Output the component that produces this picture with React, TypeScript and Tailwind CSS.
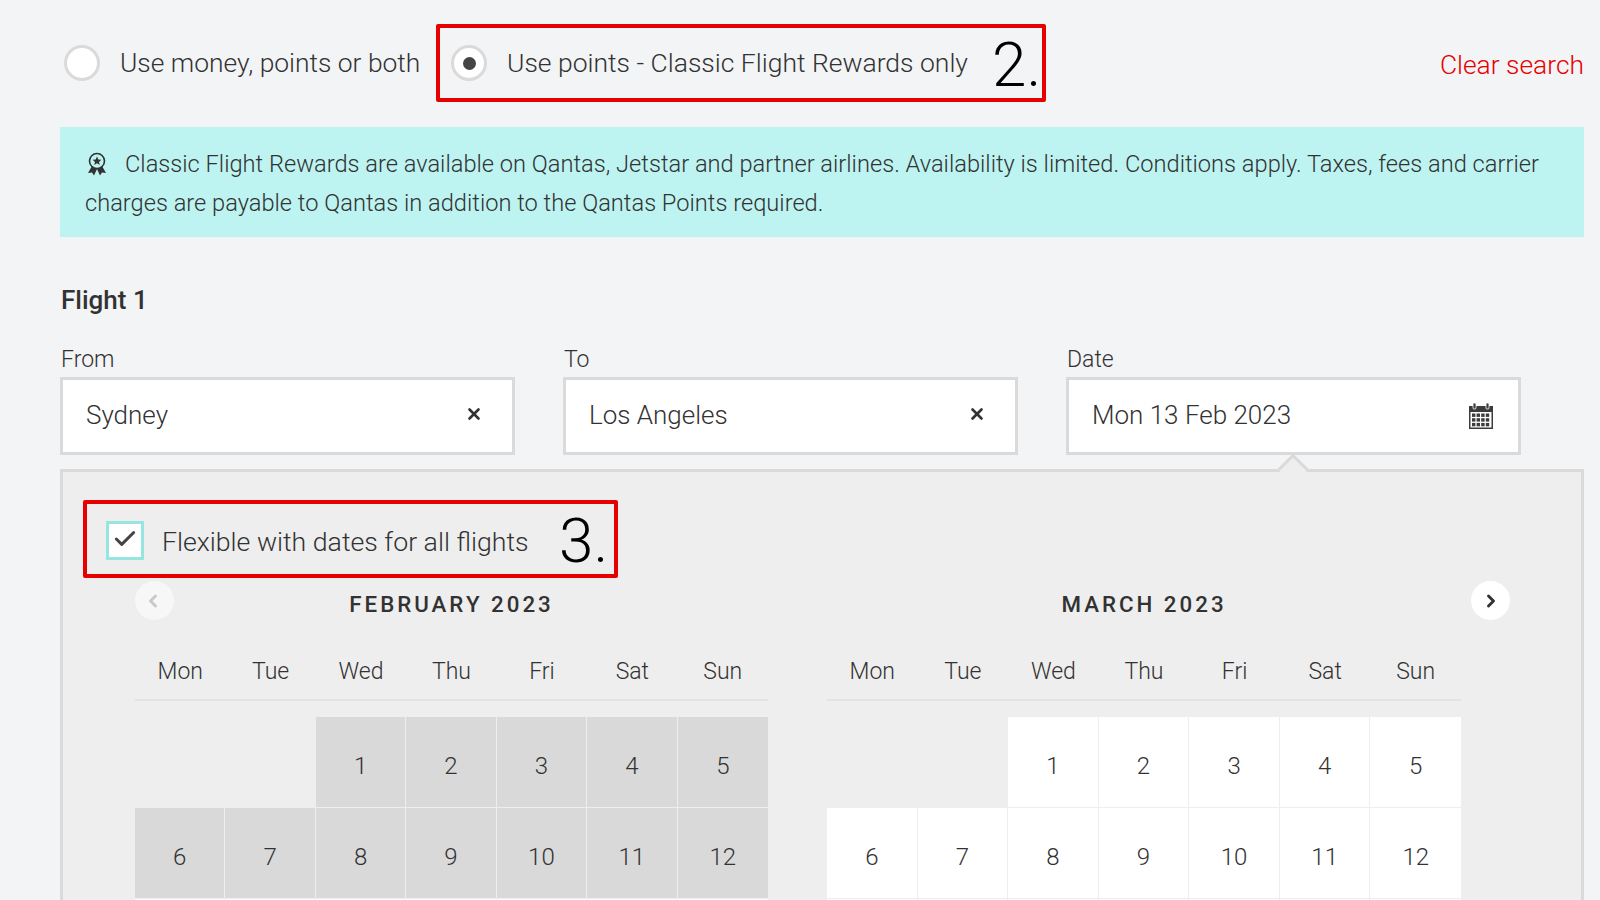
import { Check, ChevronLeft, ChevronRight, X } from "lucide-react";

const days = ["Mon", "Tue", "Wed", "Thu", "Fri", "Sat", "Sun"];
const firstWeek = ["", "", "1", "2", "3", "4", "5"];
const secondWeek = ["6", "7", "8", "9", "10", "11", "12"];
const thirdWeek = ["", "", "", "", "", "", ""];

function Rosette() {
  return (
    <svg viewBox="0 0 20 24" className="w-[20px] h-[24px] shrink-0 text-[#323232]">
      <path d="M5 14 L1 21 L5 20.5 L7 23.5 L10 17 L13 23.5 L15 20.5 L19 21 L15 14 Z" fill="currentColor" />
      <circle cx="10" cy="9" r="7.5" fill="#bdf4f1" stroke="currentColor" strokeWidth="1.6" />
      <path d="M10 4.6 L11.3 7.6 L14.4 7.8 L12 9.9 L12.8 13 L10 11.3 L7.2 13 L8 9.9 L5.6 7.8 L8.7 7.6 Z" fill="currentColor" />
    </svg>
  );
}

function CalendarIcon() {
  return (
    <svg viewBox="0 0 24 26" className="w-[24px] h-[26px] text-[#3c3c3c]">
      <path d="M0 3 H24 V26 H0 Z" fill="currentColor" />
      <rect x="4" y="0" width="3" height="6" rx="1" fill="currentColor" stroke="#fff" strokeWidth="0.8" />
      <rect x="17" y="0" width="3" height="6" rx="1" fill="currentColor" stroke="#fff" strokeWidth="0.8" />
      <rect x="1.5" y="9" width="21" height="15.5" fill="#fff" />
      {[3, 7.6, 12.2, 16.8].map((x) =>
        [10.5, 15.2, 19.9].map((y) => <rect key={`${x}-${y}`} x={x} y={y} width="3.4" height="3.4" fill="currentColor" />),
      )}
    </svg>
  );
}

function Field({ label, value, clear }: { label: string; value: string; clear?: boolean }) {
  return (
    <div className="w-[455px]">
      <div className="text-[23px] font-light leading-[28px] mt-[2px] mb-[3px] ml-[1px]">{label}</div>
      <div className="h-[78px] border-[3px] border-[#dadada] bg-white pl-[23px] pr-[25px] flex items-center justify-between">
        <span className="text-[26px] font-light mb-[2px]">{value}</span>
        {clear ? <X className="w-[18px] h-[18px] mr-[4px] mb-[4px]" strokeWidth={3.5} /> : <CalendarIcon />}
      </div>
    </div>
  );
}

function Week({ cells, className }: { cells: string[]; className: string }) {
  return (
    <div className="grid grid-cols-7 h-[91px]">
      {cells.map((cell, i) => (
        <div
          key={i}
          className={`flex items-center justify-center pt-[7px] text-[24px] font-light border-r border-b border-[#eeeeee] last:border-r-0 ${
            cell || className.includes("third") ? className : ""
          }`}
        >
          {cell}
        </div>
      ))}
    </div>
  );
}

function Month({ title, cellClass, width }: { title: string; cellClass: string; width: string }) {
  return (
    <div className={width}>
      <div className="h-[75px] flex items-start justify-center pt-[8px]">
        <h3 className="text-[22.3px] font-medium tracking-[3px] leading-[36px]">{title}</h3>
      </div>
      <div className="grid grid-cols-7 h-[48px] border-b-2 border-[#e3e3e3] pb-[9px] pt-[2px]">
        {days.map((d) => (
          <div key={d} className="text-center text-[23px] font-light">
            {d}
          </div>
        ))}
      </div>
      <div className="pt-[16px]">
        <Week cells={firstWeek} className={cellClass} />
        <Week cells={secondWeek} className={cellClass} />
        <Week cells={thirdWeek} className="third bg-white" />
      </div>
    </div>
  );
}

export default function App() {
  return (
    <div
      className="h-[900px] overflow-hidden bg-[#f3f4f6] pl-[60px] pr-[16px] pt-[24px] text-[#323232]"
      style={{ fontFamily: "Roboto, sans-serif" }}
    >
      {/* Search type */}
      <div className="flex items-center h-[78px]">
        <label className="flex items-center pl-[4px] w-[376px]">
          <span className="w-[36px] h-[36px] rounded-full bg-white border-[3px] border-[#dadada]" />
          <span className="ml-[20px] pt-[1px] text-[26.4px] font-light whitespace-nowrap">Use money, points or both</span>
        </label>
        <div className="w-[610px] h-[78px] border-4 border-[#e60000] rounded-[2px] flex items-center pl-[11px] relative">
          <span className="w-[36px] h-[36px] rounded-full bg-white border-[3px] border-[#dadada] flex items-center justify-center">
            <span className="w-[13px] h-[13px] rounded-full bg-[#444444]" />
          </span>
          <span className="ml-[20px] text-[26.5px] font-light whitespace-nowrap">Use points - Classic Flight Rewards only</span>
          <span className="absolute left-[552px] top-[-2px] text-[62px] font-light text-black leading-[78px]">2.</span>
        </div>
        <a className="ml-auto text-[26.4px] font-light text-[#e60000] pt-[5px]">Clear search</a>
      </div>

      {/* Info banner */}
      <div className="mt-[25px] h-[110px] bg-[#bdf4f1] pl-[25px] pr-[40px] pt-[18px] text-[23.65px] font-light leading-[39px]">
        <span className="inline-flex align-[-4px] ml-[2px] mr-[18px]">
          <Rosette />
        </span>
        Classic Flight Rewards are available on Qantas, Jetstar and partner airlines. Availability is limited. Conditions apply. Taxes, fees and carrier charges are payable to Qantas in addition to the Qantas Points required.
      </div>

      {/* Flight form */}
      <h2 className="mt-[46px] ml-[1px] text-[26px] font-medium leading-[34px]">Flight 1</h2>
      <div className="mt-[27px] flex gap-[48px] relative z-10">
        <Field label="From" value="Sydney" clear />
        <Field label="To" value="Los Angeles" clear />
        <Field label="Date" value="Mon 13 Feb 2023" />
      </div>

      {/* Calendar panel */}
      <div className="relative mt-[14px] h-[500px] border-[3px] border-[#dadada] bg-[#eeeeee] pl-[20px] pt-[28px]">
        <div className="absolute right-[277px] top-[-14px] w-[22px] h-[22px] rotate-45 border-l-[3px] border-t-[3px] border-[#dadada] bg-[#eeeeee]" />
        <div className="relative w-[535px] h-[78px] border-4 border-[#e60000] rounded-[2px] flex items-center pl-[19px]">
          <span className="w-[38px] h-[39px] mt-[3px] border-[3px] border-[#96e5e1] bg-white flex items-center justify-center">
            <Check className="w-[26px] h-[26px] text-[#444444] mb-[4px]" strokeWidth={2.75} />
          </span>
          <span className="ml-[18px] pt-[7px] text-[26.7px] font-light whitespace-nowrap">Flexible with dates for all flights</span>
          <span className="absolute left-[472px] top-[-2px] text-[62px] font-light text-black leading-[78px]">3.</span>
        </div>

        <div className="relative flex pl-[52px] gap-[59px]">
          <button className="absolute left-[52px] top-[3px] w-[39px] h-[39px] rounded-full bg-[#f7f7f7] flex items-center justify-center">
            <ChevronLeft className="w-[20px] h-[20px] mr-[4px] text-[#c8c8c8]" strokeWidth={3.5} />
          </button>
          <button className="absolute left-[1388px] top-[3px] w-[39px] h-[39px] rounded-full bg-white flex items-center justify-center">
            <ChevronRight className="w-[20px] h-[20px] text-[#323232]" strokeWidth={3.5} />
          </button>
          <Month title="FEBRUARY 2023" width="w-[633px]" cellClass="bg-[#d9d9d9]" />
          <Month title="MARCH 2023" width="w-[634px]" cellClass="bg-white" />
        </div>
      </div>
    </div>
  );
}
